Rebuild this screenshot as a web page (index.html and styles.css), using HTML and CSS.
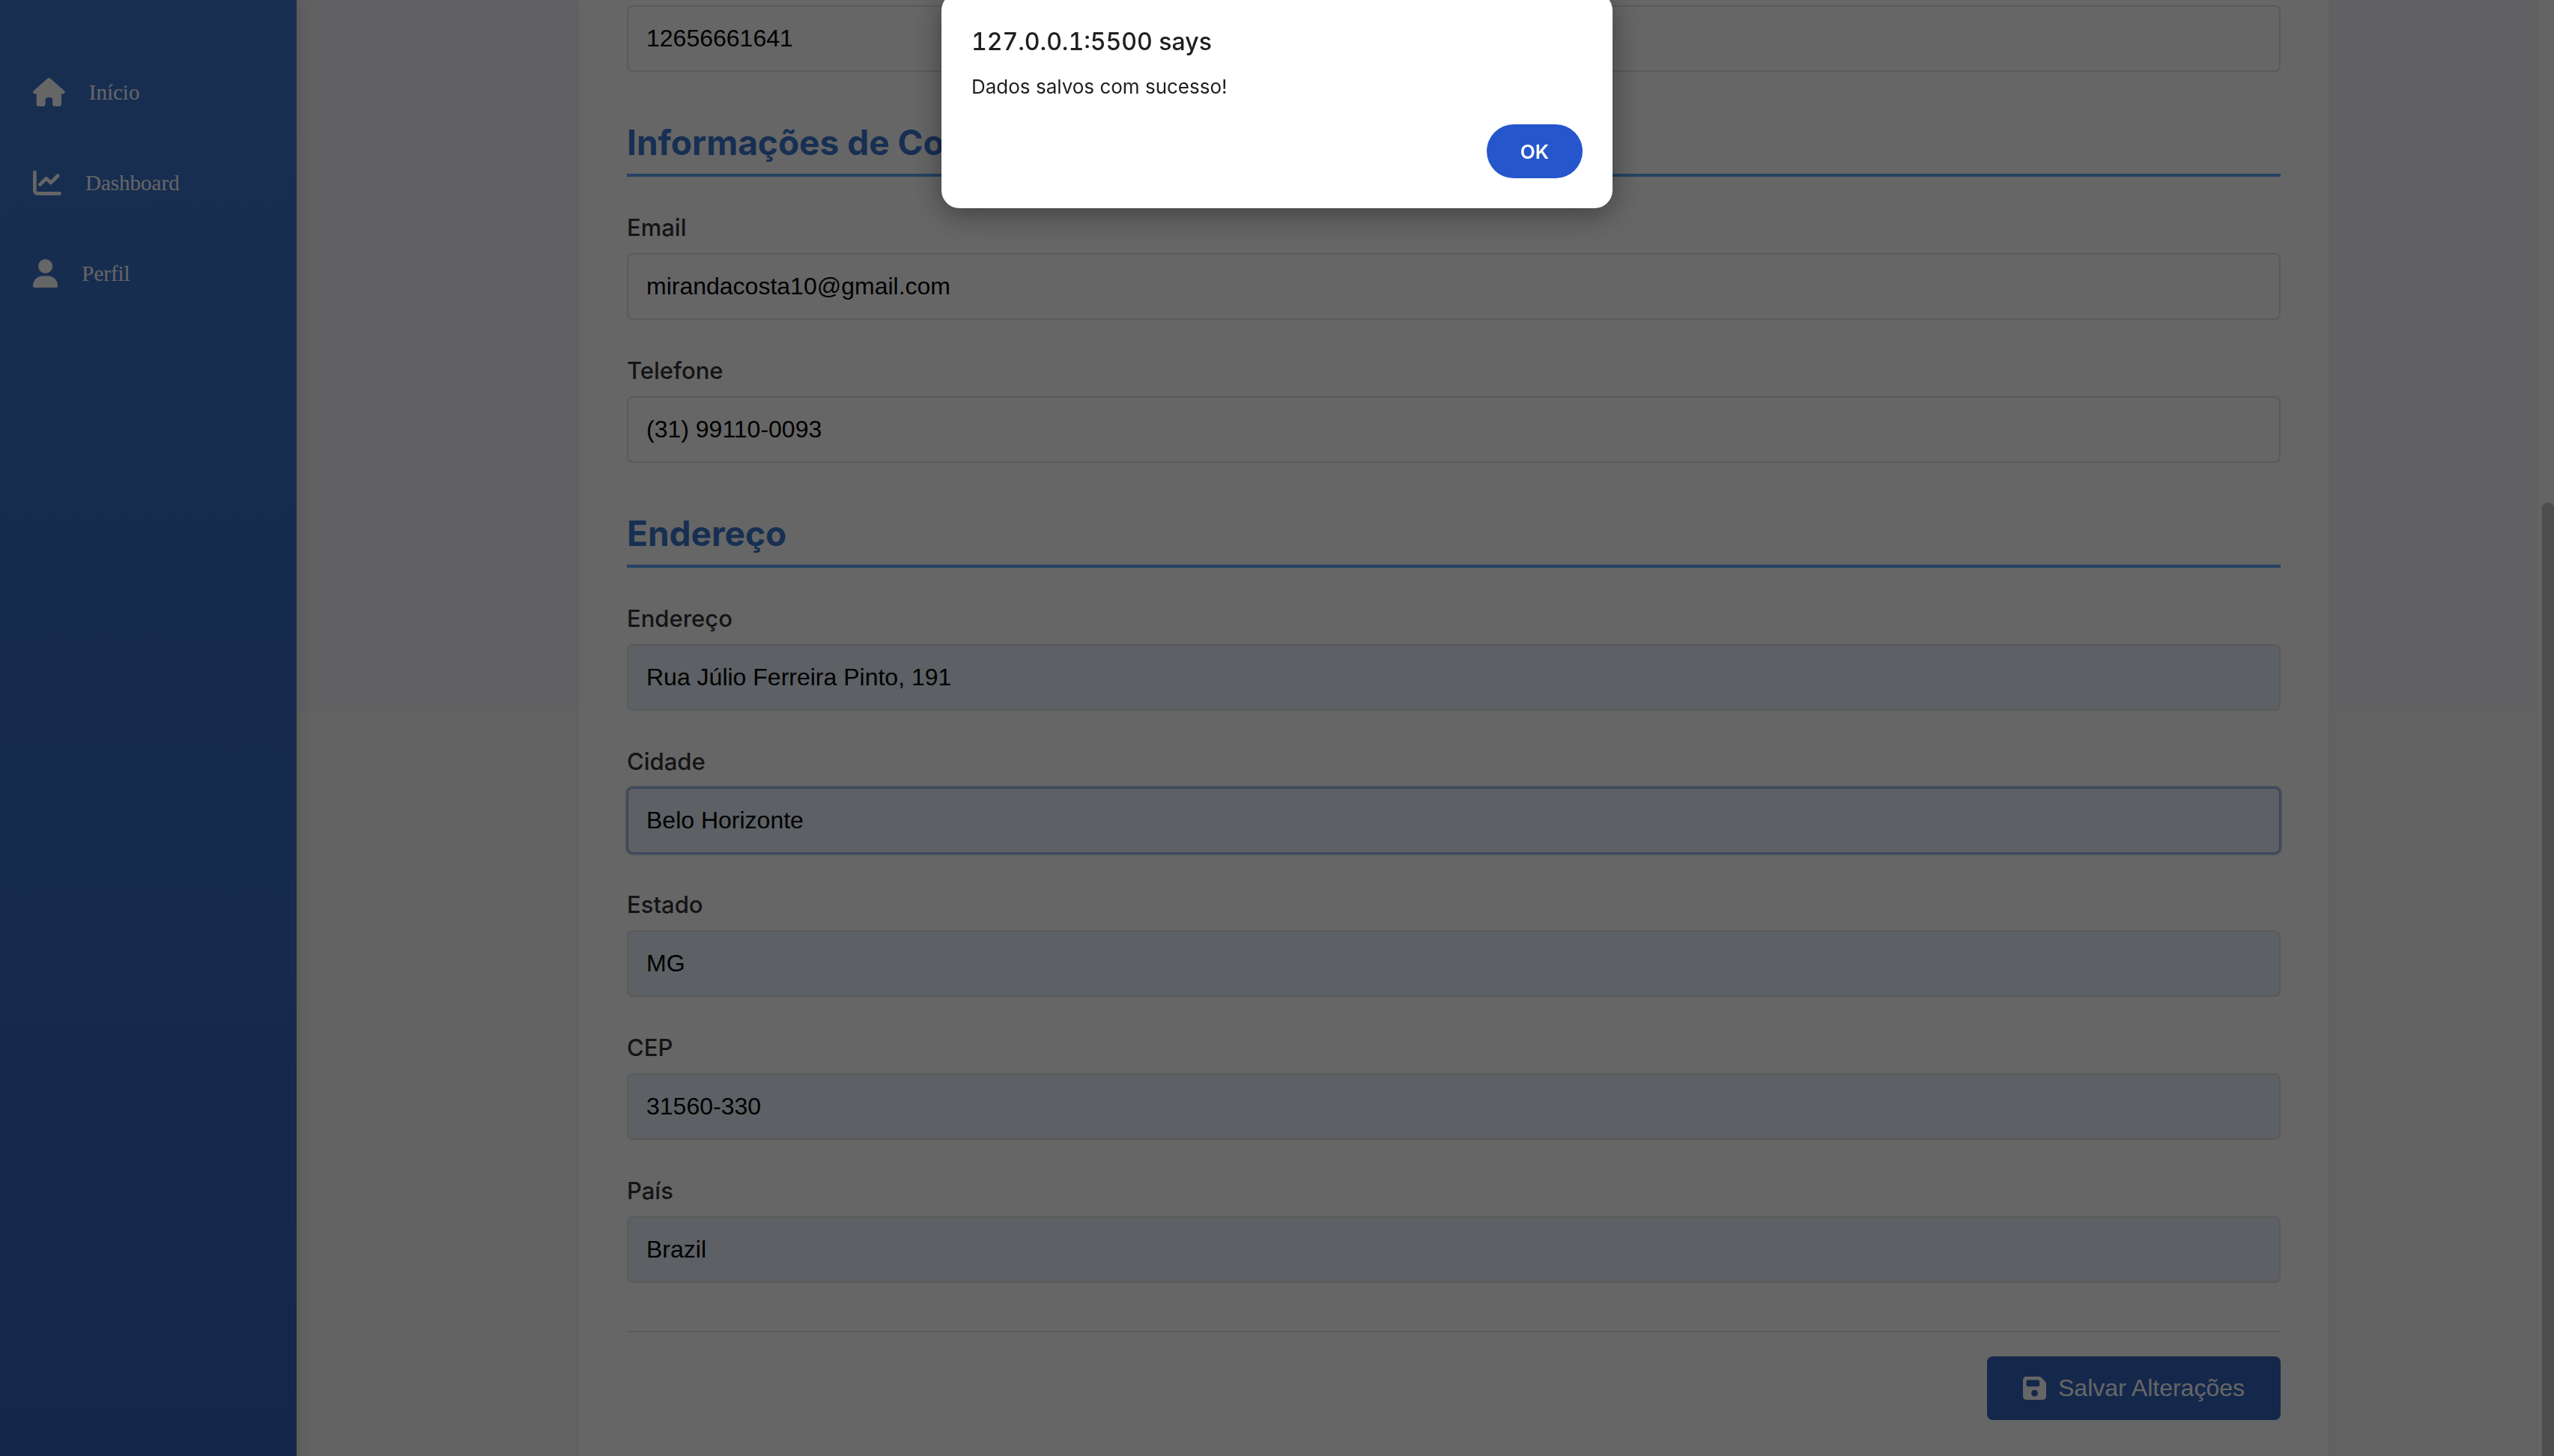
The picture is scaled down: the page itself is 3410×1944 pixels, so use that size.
FILE: index.html
```html
<!DOCTYPE html>
<html lang="pt-BR">
<head>
<meta charset="utf-8">
<meta name="viewport" content="width=device-width, initial-scale=1">
<title>Perfil</title>
<link rel="stylesheet" href="styles.css">
</head>
<body>
<div class="app">
  <nav class="sidebar" aria-label="Menu principal">
    <ul class="menu">
      <li><a class="menu-link" href="#inicio">
        <svg class="icon" viewBox="0 0 576 512" aria-hidden="true"><path d="M575.8 255.5c0 18-15 32.1-32 32.1h-32l.7 160.2c0 2.7-.2 5.4-.5 8.1V472c0 22.1-17.9 40-40 40H456c-1.1 0-2.2 0-3.3-.1c-1.4 .1-2.8 .1-4.2 .1H416 392c-22.1 0-40-17.9-40-40V448 384c0-17.7-14.3-32-32-32H256c-17.7 0-32 14.3-32 32v64 24c0 22.1-17.9 40-40 40H160 128.1c-1.5 0-3-.1-4.5-.2c-1.2 .1-2.4 .2-3.6 .2H104c-22.1 0-40-17.9-40-40V360c0-.9 0-1.9 .1-2.8V287.6H32c-18 0-32-14-32-32.1c0-9 3-17 10-24L266.4 8c7-7 15-8 22-8s15 2 21 7L564.8 231.5c8 7 12 15 11 24z"/></svg>
        <span>Início</span></a></li>
      <li><a class="menu-link" href="#dashboard">
        <svg class="icon" viewBox="0 0 512 512" aria-hidden="true"><path d="M64 64c0-17.7-14.3-32-32-32S0 46.3 0 64V400c0 44.2 35.8 80 80 80H480c17.7 0 32-14.3 32-32s-14.3-32-32-32H80c-8.800 0-16-7.200-16-16V64zm406.600 86.600c12.500-12.500 12.500-32.800 0-45.300s-32.800-12.500-45.300 0L320 210.700l-57.400-57.400c-12.500-12.500-32.800-12.500-45.300 0l-112 112c-12.500 12.500-12.500 32.800 0 45.300s32.800 12.500 45.300 0L240 221.300l57.400 57.400c12.500 12.500 32.800 12.500 45.300 0l128-128z"/></svg>
        <span>Dashboard</span></a></li>
      <li><a class="menu-link" href="#perfil">
        <svg class="icon" viewBox="0 0 448 512" aria-hidden="true"><path d="M224 256A128 128 0 1 0 224 0a128 128 0 1 0 0 256zm-45.700 48C79.800 304 0 383.800 0 482.300C0 498.700 13.300 512 29.700 512H418.300c16.400 0 29.700-13.300 29.700-29.700C448 383.800 368.200 304 269.700 304H178.300z"/></svg>
        <span>Perfil</span></a></li>
    </ul>
  </nav>

  <main class="main">
    <form class="card">
      <div class="field">
        <input class="input" type="text" value="12656661641" aria-label="CPF">
      </div>

      <section class="section">
        <h2 class="section-title">Informações de Contato</h2>
        <div class="field">
          <label for="email">Email</label>
          <input class="input" id="email" type="email" value="mirandacosta10@gmail.com">
        </div>
        <div class="field">
          <label for="telefone">Telefone</label>
          <input class="input" id="telefone" type="tel" value="(31) 99110-0093">
        </div>
      </section>

      <section class="section">
        <h2 class="section-title">Endereço</h2>
        <div class="field">
          <label for="endereco">Endereço</label>
          <input class="input filled" id="endereco" type="text" value="Rua Júlio Ferreira Pinto, 191">
        </div>
        <div class="field">
          <label for="cidade">Cidade</label>
          <input class="input filled current" id="cidade" type="text" value="Belo Horizonte">
        </div>
        <div class="field">
          <label for="estado">Estado</label>
          <input class="input filled" id="estado" type="text" value="MG">
        </div>
        <div class="field">
          <label for="cep">CEP</label>
          <input class="input filled" id="cep" type="text" value="31560-330">
        </div>
        <div class="field">
          <label for="pais">País</label>
          <input class="input filled" id="pais" type="text" value="Brazil">
        </div>
      </section>

      <div class="actions">
        <button class="save" type="button">
          <svg class="save-icon" viewBox="0 32 448 448" aria-hidden="true"><path d="M64 32C28.700 32 0 60.700 0 96V416c0 35.300 28.700 64 64 64H384c35.300 0 64-28.700 64-64V173.300c0-17-6.700-33.300-18.700-45.300L352 50.700C340 38.700 323.700 32 306.700 32H64zm0 96c0-17.700 14.300-32 32-32H288c17.700 0 32 14.300 32 32v64c0 17.700-14.300 32-32 32H96c-17.700 0-32-14.300-32-32V128zM224 288a64 64 0 1 1 0 128 64 64 0 1 1 0-128z"/></svg>
          Salvar Alterações
        </button>
      </div>
    </form>
  </main>

  <div class="scrollbar" aria-hidden="true"><div class="thumb"></div></div>
</div>

<div class="backdrop">
  <div class="dialog" role="alertdialog" aria-labelledby="dialog-title" aria-describedby="dialog-text">
    <h1 class="dialog-title" id="dialog-title">127.0.0.1:5500 says</h1>
    <p class="dialog-text" id="dialog-text">Dados salvos com sucesso!</p>
    <button class="ok" type="button">OK</button>
  </div>
</div>
</body>
</html>
```
FILE: styles.css
```css
* {
  box-sizing: border-box;
}

body {
  margin: 0;
  overflow: hidden;
  font-family: Inter, "Liberation Sans", sans-serif;
}

.app {
  display: grid;
  grid-template-columns: 396px 1fr 24px;
  height: 100vh;
  overflow: hidden;
}

/* Sidebar */
.sidebar {
  z-index: 1;
  padding-top: 86px;
  background: linear-gradient(180deg, #3c75cc, #3263bb);
  box-shadow: 4px 0 20px rgba(0, 0, 0, 0.1);
}

.menu {
  display: flex;
  flex-direction: column;
  gap: 47px;
  margin: 0;
  padding: 0;
  list-style: none;
}

.menu-link {
  display: flex;
  align-items: center;
  gap: 32px;
  height: 74px;
  padding: 0 44px;
  color: #fff;
  font-family: "Liberation Serif", serif;
  font-size: 29px;
  text-decoration: none;
}

.icon {
  height: 38px;
  fill: currentColor;
}

/* Page */
.main {
  padding: 0 277px 0 377px;
  background: linear-gradient(#f3f3f7 948px, #f6f6f4 948px);
}

.card {
  padding: 7px 64px 64px;
  background: #fff;
  box-shadow: 0 0 10px rgba(0, 0, 0, 0.06);
}

.section {
  margin-top: 64px;
}

.section-title {
  margin: 0 0 48px;
  padding: 2px 0 14px;
  border-bottom: 4px solid #5ca5f5;
  color: #3a75cc;
  font-size: 46px;
  font-weight: 700;
  line-height: 56px;
}

.field {
  display: flex;
  flex-direction: column;
}

.field + .field {
  margin-top: 48px;
}

label {
  padding: 1px 0 15px;
  color: #333;
  font-size: 31px;
  font-weight: 500;
  line-height: 38px;
}

.input {
  width: 100%;
  height: 89px;
  padding: 0 24px;
  border: 2px solid #e0e0e0;
  border-radius: 8px;
  outline: none;
  background: #fff;
  color: #000;
  font-family: "Liberation Sans", sans-serif;
  font-size: 32px;
}

.filled {
  background: #e8f0fa;
}

.current {
  border-color: #8fb0e0;
  box-shadow: 0 0 0 2px #c4d3e8;
}

.actions {
  display: flex;
  justify-content: flex-end;
  margin-top: 64px;
  padding-top: 32px;
  border-top: 2px solid #e0e0e0;
}

.save {
  display: flex;
  align-items: center;
  gap: 16px;
  height: 85px;
  padding: 0 48px;
  border: 0;
  border-radius: 8px;
  background: #3264bc;
  color: #fff;
  font-family: "Liberation Sans", sans-serif;
  font-size: 32px;
}

.save-icon {
  width: 31px;
  height: 31px;
  fill: currentColor;
}

.scrollbar {
  display: flex;
  flex-direction: column;
  align-items: flex-end;
  padding-top: 671px;
  border-left: 2px solid #f0f0f0;
  background: #fafafa;
}

.thumb {
  flex: 1;
  width: 16px;
  border-radius: 8px 8px 0 0;
  background: #c0c0c0;
}

/* Alert */
.backdrop {
  position: fixed;
  inset: 0;
  z-index: 2;
  display: flex;
  justify-content: center;
  align-items: flex-start;
  background: rgba(0, 0, 0, 0.6);
}

.dialog {
  display: flex;
  flex-direction: column;
  width: 896px;
  margin-top: -10px;
  padding: 46px 40px 40px;
  border-radius: 24px;
  background: #fff;
  color: #1f1f1f;
  box-shadow: 0 8px 40px rgba(0, 0, 0, 0.4);
}

.dialog-title {
  margin: 0 0 20px;
  font-size: 32px;
  font-variant-numeric: tabular-nums;
  font-weight: 500;
  line-height: 40px;
}

.dialog-text {
  margin: 0 0 30px;
  font-size: 26px;
  line-height: 40px;
}

.ok {
  align-self: flex-end;
  width: 128px;
  height: 72px;
  border: 0;
  border-radius: 36px;
  background: #2656cc;
  color: #fff;
  font-family: inherit;
  font-size: 26px;
  font-weight: 600;
}
```
